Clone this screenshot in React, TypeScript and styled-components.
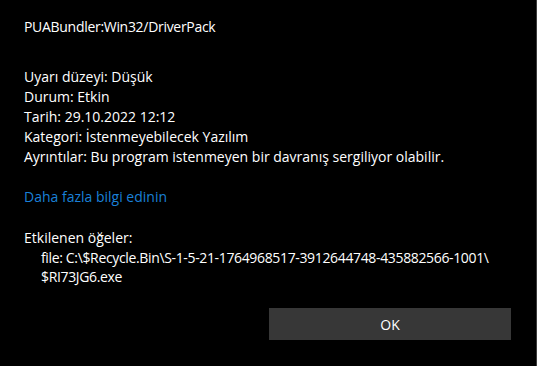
import styled, { createGlobalStyle } from 'styled-components';

const GlobalStyle = createGlobalStyle`
  html, body {
    margin: 0;
    padding: 0;
    background: #000;
  }
`;

const Dialog = styled.div`
  box-sizing: border-box;
  width: 537px;
  height: 366px;
  background: #000;
  border-right: 1px solid #3c3c3c;
  padding: 17px 25px 0 24px;
  display: flex;
  flex-direction: column;
  font-family: "Segoe UI", "Open Sans", sans-serif;
  font-size: 14px;
  line-height: 20px;
  color: #fff;
`;

const Title = styled.div`
  margin-bottom: 30px;
  letter-spacing: -0.3px;
`;

const InfoList = styled.div`
  display: flex;
  flex-direction: column;
  margin-bottom: 20px;
`;

const Link = styled.a`
  color: #1a80d8;
  text-decoration: none;
  cursor: pointer;
  margin-bottom: 21px;
`;

const FileList = styled.div`
  padding-left: 17px;
  line-height: 19px;
  white-space: nowrap;
  letter-spacing: -0.35px;
`;

const Footer = styled.div`
  display: flex;
  justify-content: flex-end;
  margin-top: 22px;
`;

const OkButton = styled.button`
  width: 242px;
  height: 32px;
  border: none;
  background: #373737;
  color: #fff;
  font-family: inherit;
  font-size: 14px;
  cursor: pointer;
`;

const info = [
  'Uyarı düzeyi: Düşük',
  'Durum: Etkin',
  'Tarih: 29.10.2022 12:12',
  'Kategori: İstenmeyebilecek Yazılım',
  'Ayrıntılar: Bu program istenmeyen bir davranış sergiliyor olabilir.',
];

export default function App() {
  return (
    <>
      <GlobalStyle />
      <Dialog>
        <Title>PUABundler:Win32/DriverPack</Title>
        <InfoList>
          {info.map((line) => (
            <div key={line}>{line}</div>
          ))}
        </InfoList>
        <Link>Daha fazla bilgi edinin</Link>
        <div>Etkilenen öğeler:</div>
        <FileList>
          <div>file: C:\$Recycle.Bin\S-1-5-21-1764968517-3912644748-435882566-1001\</div>
          <div>$RI73JG6.exe</div>
        </FileList>
        <Footer>
          <OkButton>OK</OkButton>
        </Footer>
      </Dialog>
    </>
  );
}
